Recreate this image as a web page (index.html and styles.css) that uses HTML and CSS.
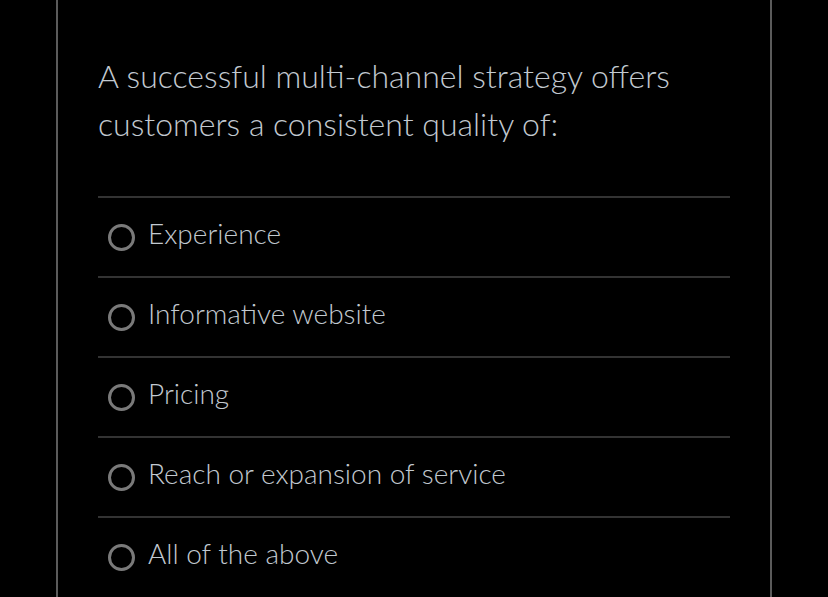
FILE: index.html
```html
<!DOCTYPE html>
<html lang="en">
<head>
<meta charset="utf-8">
<title>Quiz</title>
<link rel="stylesheet" href="styles.css">
</head>
<body>
<main class="panel">
  <p class="question">A successful multi-channel strategy offers customers a consistent quality of:</p>
  <ul class="options">
    <li class="option"><span class="radio"></span><span class="label">Experience</span></li>
    <li class="option"><span class="radio"></span><span class="label">Informative website</span></li>
    <li class="option"><span class="radio"></span><span class="label">Pricing</span></li>
    <li class="option"><span class="radio"></span><span class="label">Reach or expansion of service</span></li>
    <li class="option"><span class="radio"></span><span class="label">All of the above</span></li>
  </ul>
</main>
</body>
</html>
```
FILE: styles.css
```css
html, body {
  margin: 0;
  padding: 0;
  background: #000;
  height: 100%;
  overflow: hidden;
}
body {
  font-family: "Lato Light", Lato, "Open Sans", sans-serif;
  color: #c2c9d0;
}
.panel {
  margin-left: 56px;
  width: 716px;
  height: 100%;
  border-left: 2px solid #5b5b5b;
  border-right: 2px solid #5b5b5b;
  padding: 52px 40px 0;
  box-sizing: border-box;
  overflow: hidden;
}
.question {
  margin: 0;
  font-size: 32px;
  font-weight: 300;
  line-height: 48px;
  width: 600px;
}
.options {
  list-style: none;
  margin: 48px 0 0;
  padding: 0;
}
.option {
  display: flex;
  align-items: center;
  height: 78px;
  border-top: 2px solid #333;
}
.radio {
  width: 21px;
  height: 21px;
  border: 3px solid #7a7a7a;
  border-radius: 50%;
  margin-left: 10px;
  margin-right: 13px;
  flex: none;
}
.label {
  font-size: 28px;
  font-weight: 300;
  margin-bottom: 8px;
}
```
